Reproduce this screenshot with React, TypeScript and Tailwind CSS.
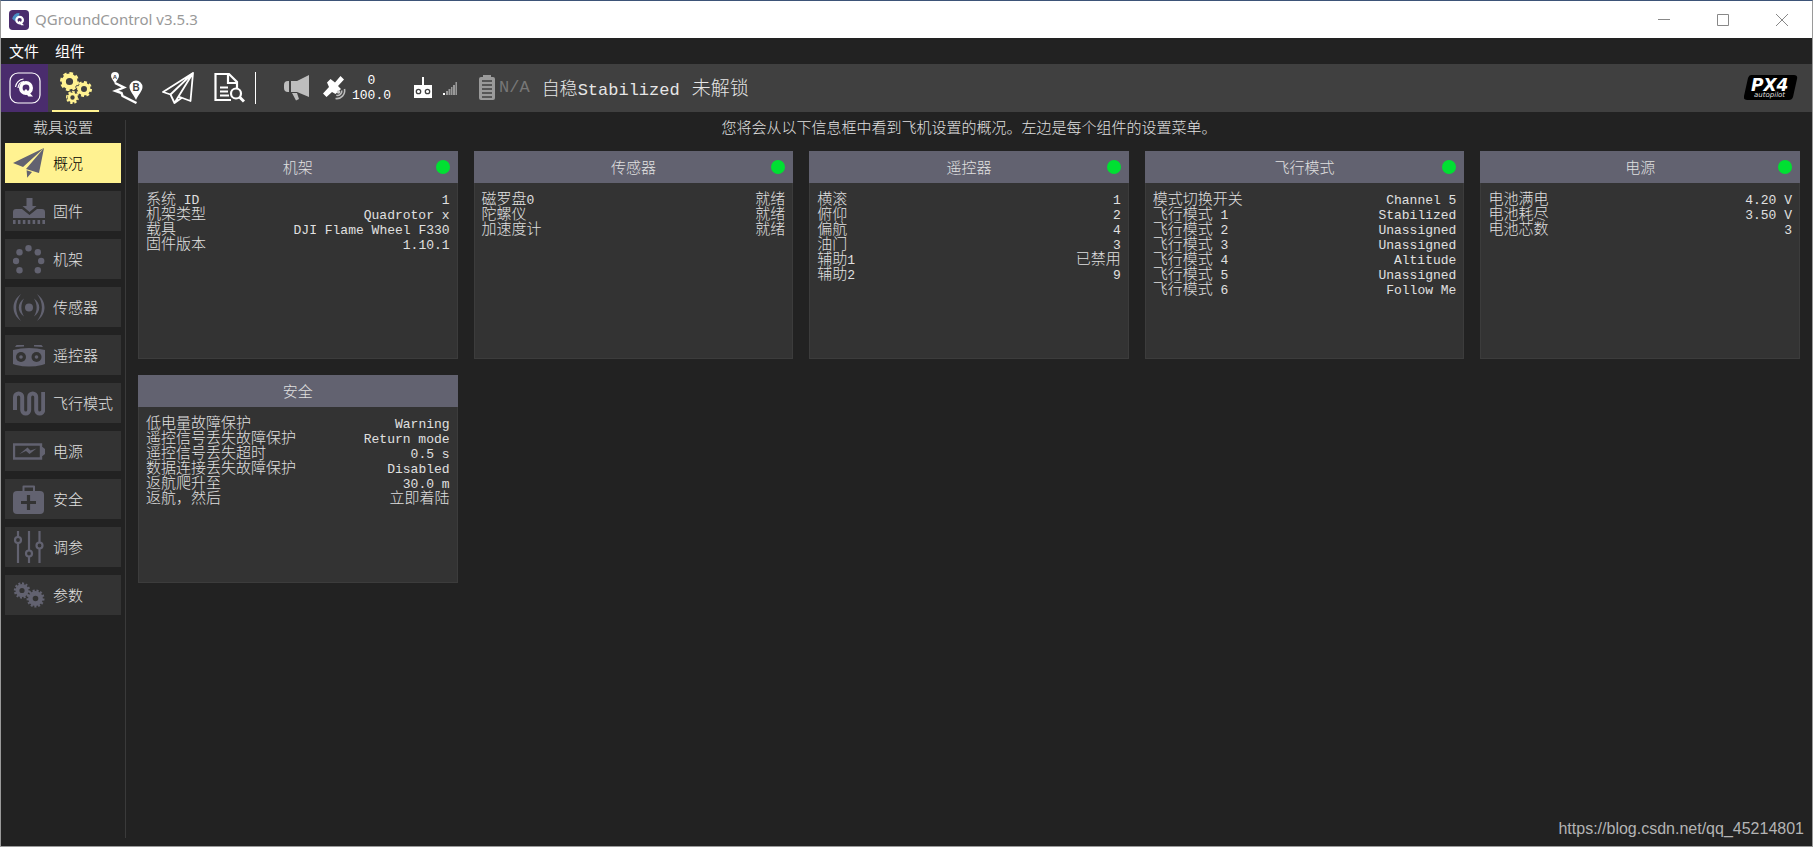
import React from "react";

type Row = [string, string];

type Card = {
  title: string;
  status: boolean;
  rows: Row[];
};

const cards: Card[] = [
  {
    title: "机架",
    status: true,
    rows: [
      ["系统 ID", "1"],
      ["机架类型", "Quadrotor x"],
      ["载具", "DJI Flame Wheel F330"],
      ["固件版本", "1.10.1"],
    ],
  },
  {
    title: "传感器",
    status: true,
    rows: [
      ["磁罗盘0", "就绪"],
      ["陀螺仪", "就绪"],
      ["加速度计", "就绪"],
    ],
  },
  {
    title: "遥控器",
    status: true,
    rows: [
      ["横滚", "1"],
      ["俯仰", "2"],
      ["偏航", "4"],
      ["油门", "3"],
      ["辅助1", "已禁用"],
      ["辅助2", "9"],
    ],
  },
  {
    title: "飞行模式",
    status: true,
    rows: [
      ["模式切换开关", "Channel 5"],
      ["飞行模式 1", "Stabilized"],
      ["飞行模式 2", "Unassigned"],
      ["飞行模式 3", "Unassigned"],
      ["飞行模式 4", "Altitude"],
      ["飞行模式 5", "Unassigned"],
      ["飞行模式 6", "Follow Me"],
    ],
  },
  {
    title: "电源",
    status: true,
    rows: [
      ["电池满电", "4.20 V"],
      ["电池耗尽", "3.50 V"],
      ["电池芯数", "3"],
    ],
  },
  {
    title: "安全",
    status: false,
    rows: [
      ["低电量故障保护", "Warning"],
      ["遥控信号丢失故障保护", "Return mode"],
      ["遥控信号丢失超时", "0.5 s"],
      ["数据连接丢失故障保护", "Disabled"],
      ["返航爬升至", "30.0 m"],
      ["返航，然后", "立即着陆"],
    ],
  },
];

// Latin runs are set smaller than the Chinese around them,
// with no line height of their own so that they never stretch a row
const Mixed = ({ text }: { text: string }) => (
  <>
    {text.split(/([\x20-\x7e]+)/).map((part, i) =>
      i % 2 === 1 ? (
        <span
          key={i}
          className="font-['Liberation_Mono',monospace] text-[13px] leading-[0px]"
        >
          {part}
        </span>
      ) : (
        part
      )
    )}
  </>
);

const Gear = ({
  cx,
  cy,
  r,
  teeth,
  hole,
}: {
  cx: number;
  cy: number;
  r: number;
  teeth: number;
  hole: number;
}) => {
  const body = r - 1.6;
  return (
    <g fill="none" stroke="currentColor">
      <circle cx={cx} cy={cy} r={(body + hole) / 2} strokeWidth={body - hole} />
      <circle
        cx={cx}
        cy={cy}
        r={r - 1.2}
        strokeWidth={2.4}
        pathLength={teeth * 2}
        strokeDasharray="1.1 0.9"
      />
    </g>
  );
};

const Icon = ({ children }: { children: React.ReactNode }) => (
  <svg
    viewBox="0 0 32 32"
    className="size-8 shrink-0"
    fill="currentColor"
    aria-hidden="true"
  >
    {children}
  </svg>
);

const LogoMark = () => (
  <>
    <circle
      cx="17"
      cy="16"
      r="5.2"
      fill="none"
      stroke="currentColor"
      strokeWidth="3.6"
    />
    <path d="M17 17l7 7.5h-4.6L15 19z" />
  </>
);

const menu = [
  {
    label: "概况",
    icon: (
      <Icon>
        <path d="M31 1L0 16l10 4zM31 1L13 22l13 4zM13.6 23.2L19 25l-4.8 5.8z" />
      </Icon>
    ),
  },
  {
    label: "固件",
    icon: (
      <Icon>
        <path d="M13.5 3h6v8h4l-7 6-7-6h4zM3 14h6l7.5 6 7.5-6h5a3 3 0 0 1 3 3v6H0v-6a3 3 0 0 1 3-3z" />
        <path
          d="M0 27h32"
          fill="none"
          stroke="currentColor"
          strokeWidth="4"
          strokeDasharray="2.6 2.3"
        />
      </Icon>
    ),
  },
  {
    label: "机架",
    icon: (
      <Icon>
        <circle cx="15.5" cy="5.3" r="3.2" />
        <circle cx="6.5" cy="9.3" r="3.2" />
        <circle cx="24.8" cy="9.3" r="3.2" />
        <circle cx="3" cy="18" r="3.2" />
        <circle cx="28.2" cy="18" r="3.2" />
        <circle cx="6.5" cy="27.3" r="3.2" />
        <circle cx="24.8" cy="27.3" r="3.2" />
      </Icon>
    ),
  },
  {
    label: "传感器",
    icon: (
      <Icon>
        <circle cx="16" cy="16.5" r="4" />
        <path d="M8 3C-2 10-2 23 8 30 1.5 22 1.5 11 8 3zM24 3c10 7 10 20 0 27 6.5-8 6.5-19 0-27zM11 7.5c-7 5-7 13 0 18-3.5-6-3.5-12 0-18zM21 7.5c7 5 7 13 0 18 3.5-6 3.5-12 0-18z" />
      </Icon>
    ),
  },
  {
    label: "遥控器",
    icon: (
      <Icon>
        <path d="M2 8l1.5-2H11v1.5zM21 6h7.5L30 8l-9-.5zM0 11q16-4 32 0v14l-3 1q-13 3-26 0l-3-1z" />
        <g fill="#333333">
          <circle cx="8" cy="18" r="5" />
          <circle cx="23.5" cy="18" r="5" />
        </g>
        <circle cx="8" cy="18" r="1.8" />
        <circle cx="23.5" cy="18" r="1.8" />
      </Icon>
    ),
  },
  {
    label: "飞行模式",
    icon: (
      <Icon>
        <path
          d="M2 23V10a3.6 3.6 0 0 1 7.2 0v13a3.5 3.5 0 0 0 7 0V10a3.5 3.5 0 0 1 7 0v13a3.5 3.5 0 0 0 7 0V5"
          fill="none"
          stroke="currentColor"
          strokeWidth="4"
        />
      </Icon>
    ),
  },
  {
    label: "电源",
    icon: (
      <Icon>
        <path
          d="M1 9.5h27v14H1z"
          fill="none"
          stroke="currentColor"
          strokeWidth="2.4"
        />
        <path d="M28 12h1.5L32 14v5l-2.5 2H28zM6.5 19l8-6.5 3 3 6-2-7 5.5-3.5-3z" />
      </Icon>
    ),
  },
  {
    label: "安全",
    icon: (
      <Icon>
        <rect x="0" y="8" width="31" height="23" rx="4" />
        <path
          d="M10.5 8V3.5H21V8"
          fill="none"
          stroke="currentColor"
          strokeWidth="2"
          strokeLinejoin="round"
        />
        <path d="M15.5 12v15M8 19.5h15" stroke="#333333" strokeWidth="3.2" />
      </Icon>
    ),
  },
  {
    label: "调参",
    icon: (
      <Icon>
        <g fill="none" stroke="currentColor" strokeWidth="2.2">
          <path d="M5 0v6M5 12v20M16 0v19.5M16 25.5V32M26.5 0v11.5M26.5 17.5V32" />
          <circle cx="5" cy="9" r="3" />
          <circle cx="16" cy="22.5" r="3" />
          <circle cx="26.5" cy="14.5" r="3" />
        </g>
      </Icon>
    ),
  },
  {
    label: "参数",
    icon: (
      <Icon>
        <Gear cx={9} cy={11.5} r={8.2} teeth={12} hole={2.6} />
        <Gear cx={22.5} cy={19.5} r={9} teeth={13} hole={2.8} />
      </Icon>
    ),
  },
];

const views = [
  {
    label: "Settings",
    style: "bg-[#4a2c6d] text-white",
    icon: (
      <Icon>
        <rect
          x="1"
          y="1"
          width="30"
          height="30"
          rx="8"
          fill="none"
          stroke="currentColor"
          strokeWidth="1.2"
        />
        <LogoMark />
        <path
          d="M6.5 15a9 9 0 0 1 8-8M9 16a7 7 0 0 1 6-6.5M11.5 16a5 5 0 0 1 4-4"
          fill="none"
          stroke="currentColor"
          strokeWidth="1.2"
        />
      </Icon>
    ),
  },
  {
    label: "Vehicle Setup",
    style: "text-[#fff291] border-b-2 border-[#fff291] pt-0.5",
    icon: (
      <Icon>
        <Gear cx={9.5} cy={9.5} r={9.5} teeth={8} hole={3.6} />
        <Gear cx={24} cy={17} r={8} teeth={8} hole={3} />
        <Gear cx={12.5} cy={25.5} r={6.5} teeth={8} hole={2.2} />
      </Icon>
    ),
  },
  {
    label: "Plan",
    style: "text-white",
    icon: (
      <Icon>
        <path d="M4 0a4 4 0 0 1 4 4c0 2.5-2.5 4.5-4 7.5C2.5 8.5 0 6.5 0 4a4 4 0 0 1 4-4zM25 8.500a6.5 6.5 0 0 1 6.5 6.5c0 4-4.5 8-6.5 13-2-5-6.5-9-6.5-13A6.5 6.5 0 0 1 25 8.5z" />
        <path
          d="M4 11l9 4.5-8.5 3.5 6 2 1 3 14 7"
          fill="none"
          stroke="currentColor"
          strokeWidth="2.4"
        />
        <g
          fill="#404040"
          fontFamily="Liberation Sans, sans-serif"
          fontWeight="bold"
          textAnchor="middle"
        >
          <text x="4" y="7" fontSize="6">
            A
          </text>
          <text x="25" y="19" fontSize="10">
            B
          </text>
        </g>
      </Icon>
    ),
  },
  {
    label: "Fly",
    style: "text-white",
    icon: (
      <Icon>
        <path
          d="M31 1L1 20l7.5 2.5zM31 1L8.5 22.5 12.5 31l4-6.5zM31 1L16.5 24.5 28.5 29zM12.5 31l7-5"
          fill="none"
          stroke="currentColor"
          strokeWidth="1.8"
          strokeLinejoin="round"
        />
      </Icon>
    ),
  },
  {
    label: "Analyze",
    style: "text-white",
    icon: (
      <Icon>
        <path
          d="M18 28H2.5V2H16l8 8v6M15 2v9h9M7 15.5h8M7 19.5h8M7 23.5h9"
          fill="none"
          stroke="currentColor"
          strokeWidth="2.2"
        />
        <circle
          cx="23"
          cy="21.5"
          r="5"
          fill="none"
          stroke="currentColor"
          strokeWidth="2.2"
        />
        <path d="M26.5 25l4.5 4.5" stroke="currentColor" strokeWidth="3" />
      </Icon>
    ),
  },
];

const TitleBar = () => (
  <header className="flex h-[37px] items-center bg-white pl-2 text-[#999999]">
    <svg viewBox="0 0 32 32" className="mr-[6px] size-5" aria-hidden="true">
      <rect width="32" height="32" rx="6" fill="#4a2c6d" />
      <path d="M5 14a11 11 0 0 1 12-9l-2 7-5 6z" fill="#4a8fc4" />
      <g fill="#ffffff" color="#ffffff">
        <LogoMark />
      </g>
    </svg>
    <h1 className="font-['Noto_Sans',sans-serif] text-[15px] font-normal">
      QGroundControl v3.5.3
    </h1>
    <div className="mr-px ml-auto flex">
      {[
        ["Minimize", "M0 5.5h12"],
        ["Maximize", "M.5.5h11v11H.5z"],
        ["Close", "M0 0l12 12M12 0L0 12"],
      ].map(([label, d]) => (
        <button
          key={label}
          aria-label={label}
          className="flex h-9 w-[59px] items-center justify-center"
        >
          <svg viewBox="0 0 12 12" className="size-3" fill="none">
            <path d={d} stroke="#888888" strokeWidth="1" />
          </svg>
        </button>
      ))}
    </div>
  </header>
);

const Toolbar = () => (
  <div className="flex h-12 items-center bg-[#404040] text-white">
    <nav className="flex gap-1">
      {views.map((view) => (
        <button
          key={view.label}
          aria-label={view.label}
          className={`flex h-12 w-[47px] items-center justify-center ${view.style}`}
        >
          {view.icon}
        </button>
      ))}
    </nav>
    <div className="mr-7 ml-[3px] h-8 w-px bg-white" />

    <svg
      viewBox="0 0 26 26"
      className="size-[26px] text-[#bdbdbd]"
      fill="currentColor"
      aria-hidden="true"
    >
      <path d="M5 6v11H4a4 4 0 0 1-4-4v-3a4 4 0 0 1 4-4zM7 6h6L25 0v22l-12-5H7zM8 18h5l2 6-3 1.5z" />
    </svg>
    <svg
      viewBox="0 0 26 26"
      className="ml-3 size-[26px]"
      fill="currentColor"
      aria-hidden="true"
    >
      <path d="M5 7.5L8.5 4 13 7.5 18.5 1 22 4.5 16 11l3 3-5.5 5-3.5-2-5.500 5L1 18.500l6-6.500z" />
      <circle cx="16.5" cy="17" r="1.8" fill="#d0d0d0" />
      <g fill="none" stroke="#bdbdbd" strokeWidth="1.6">
        <path d="M22.5 14a8 8 0 0 1-9 9.5" />
        <path d="M19.8 15.5a4.5 4.5 0 0 1-5.5 4.8" />
      </g>
    </svg>
    <div className="ml-1 flex flex-col text-center font-['Liberation_Mono',monospace] text-[13px] leading-[15px]">
      <span>0</span>
      <span>100.0</span>
    </div>

    <svg
      viewBox="0 0 20 22"
      className="ml-[22px] h-[22px] w-5"
      fill="currentColor"
      aria-hidden="true"
    >
      <path d="M9 0h2v8H9zM1 8h18v13H1z" />
      <g fill="none" stroke="#404040" strokeWidth="1.3">
        <circle cx="5.5" cy="14.5" r="2.2" />
        <circle cx="14.5" cy="14.5" r="2.2" />
      </g>
    </svg>
    <svg
      viewBox="0 0 14 13"
      className="ml-[10px] h-[13px] w-[14px]"
      aria-hidden="true"
    >
      <path d="M0 11h2v2H0z" fill="#ffffff" />
      <path
        d="M3 9h2v4H3zM5.5 7h2v6h-2zM8 5h1.5v8H8zM10 3h2v10h-2zM12.5 0H14v13h-1.5z"
        fill="#999999"
      />
    </svg>
    <svg
      viewBox="0 0 16 26"
      className="ml-[22px] h-[26px] w-4 text-[#9a9a9a]"
      fill="currentColor"
      aria-hidden="true"
    >
      <path d="M4 0h8v3H4z" />
      <rect y="2" width="16" height="23" rx="2" />
      <path
        d="M3 6h10M3 10h10M3 14h10M3 18h10M3 22h10"
        stroke="#404040"
        strokeWidth="1.6"
      />
    </svg>
    <span className="ml-1 font-['Liberation_Mono',monospace] text-[17px] text-[#777777]">
      N/A
    </span>
    <button className="ml-3 pb-0.5 text-[18px] text-[#e6e6e6]">
      自稳
      <span className="font-['Liberation_Mono',monospace] text-[17px] leading-[0px]">
        Stabilized
      </span>
    </button>
    <button className="ml-3 pb-0.5 text-[19px] text-[#e6e6e6]">未解锁</button>

    <svg
      viewBox="0 0 54 26"
      className="mr-[14px] ml-auto h-[26px] w-[54px]"
      role="img"
      aria-label="PX4 autopilot"
    >
      <path
        d="M7 0h43q4 0 3 4l-4 18q-1 3-4 3H3q-4 0-3-4L4 3q1-3 3-3z"
        fill="#000000"
      />
      <text
        x="7"
        y="16"
        fontSize="17"
        fontWeight="bold"
        fontStyle="italic"
        fontFamily="DejaVu Sans, sans-serif"
        fill="#ffffff"
      >
        PX4
      </text>
      <text
        x="10"
        y="22"
        fontSize="7"
        fontStyle="italic"
        fontFamily="DejaVu Sans, sans-serif"
        fill="#dddddd"
      >
        autopilot
      </text>
    </svg>
  </div>
);

const SummaryCard = ({ card }: { card: Card }) => (
  <section className="flex h-52 flex-col">
    <div className="relative flex h-8 shrink-0 items-center justify-center bg-[#626270]">
      <h2 className="leading-5">{card.title}</h2>
      {card.status && (
        <span className="absolute right-2 size-[14px] rounded-full bg-[#00e032]" />
      )}
    </div>
    <div className="grow border border-t-0 border-[#3c3c3c] bg-[#333333] px-[7px] pt-[7px]">
      <table className="w-full leading-[15px]">
        <tbody>
          {card.rows.map(([name, value]) => (
            <tr key={name} className="h-[15px]">
              <th scope="row" className="p-0 text-left font-light">
                <Mixed text={name} />
              </th>
              <td className="p-0 text-right">
                <Mixed text={value} />
              </td>
            </tr>
          ))}
        </tbody>
      </table>
    </div>
  </section>
);

const App = () => {
  return (
    <div className="relative flex min-h-screen flex-col border border-[#9a9a9a] border-t-[#3d5478] bg-[#222222] font-['Noto_Sans_CJK_SC',sans-serif] text-[15px] font-light text-[#e0e0e0]">
      <TitleBar />
      <nav className="flex h-[26px] items-center gap-4 pl-2 leading-5 font-normal text-white">
        <button>文件</button>
        <button>组件</button>
      </nav>
      <Toolbar />

      <div className="flex grow">
        <aside className="flex w-[124px] shrink-0 flex-col gap-2 px-1 pt-[5px]">
          <h2 className="h-[18px] text-center leading-5">载具设置</h2>
          {menu.map((item, index) => (
            <button
              key={item.label}
              className={`flex h-10 items-center gap-2 pl-2 whitespace-nowrap ${
                index === 0 ? "bg-[#fff291] text-black" : "bg-[#333333]"
              }`}
            >
              <span className="text-[#626270]">{item.icon}</span>
              {item.label}
            </button>
          ))}
        </aside>
        <div className="my-2 w-px bg-[#3a3a3a]" />

        <main className="grow pt-[5px] pr-3 pl-3">
          <p className="mb-[14px] text-center leading-5">
            您将会从以下信息框中看到飞机设置的概况。左边是每个组件的设置菜单。
          </p>
          <div className="grid grid-cols-5 gap-4">
            {cards.map((card) => (
              <SummaryCard key={card.title} card={card} />
            ))}
          </div>
        </main>
      </div>

      <a
        href="https://blog.csdn.net/qq_45214801"
        className="absolute right-2 bottom-[5px] font-['Liberation_Sans',sans-serif] text-[16px] text-[#b4b4b4]"
      >
        https://blog.csdn.net/qq_45214801
      </a>
    </div>
  );
};

export default App;
